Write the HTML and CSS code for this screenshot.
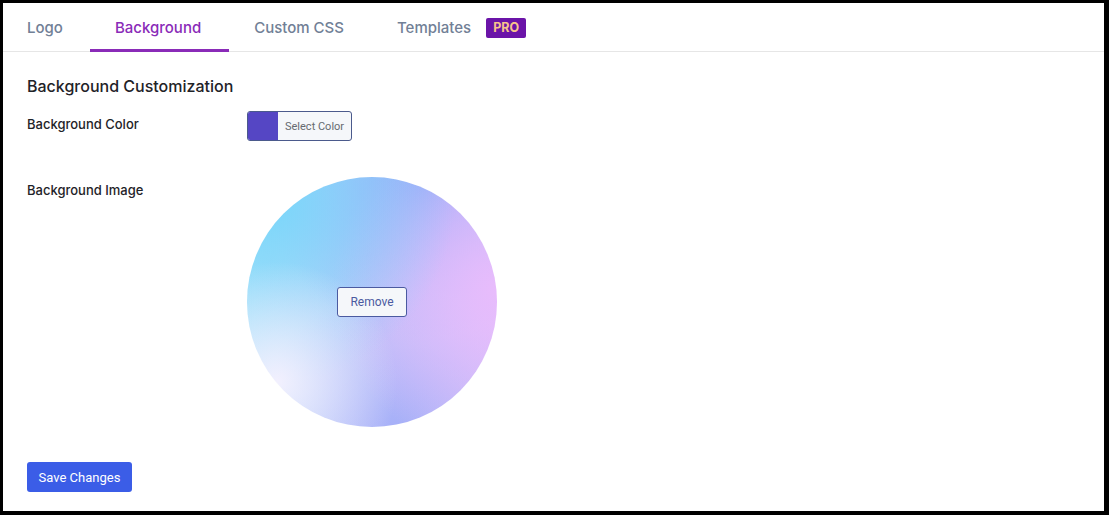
FILE: index.html
```html
<!DOCTYPE html>
<html>
<head>
<meta charset="utf-8">
<link rel="stylesheet" href="styles.css">
</head>
<body>
<div class="frame">
  <nav class="tabs">
    <div class="tab">Logo</div>
    <div class="tab active">Background</div>
    <div class="tab">Custom CSS</div>
    <div class="tab">Templates <span class="pro">PRO</span></div>
  </nav>
  <main class="content">
    <h2 class="title">Background Customization</h2>
    <div class="row row-color">
      <div class="label">Background Color</div>
      <div class="picker">
        <span class="swatch"></span>
        <span class="picker-text">Select Color</span>
      </div>
    </div>
    <div class="row row-image">
      <div class="label">Background Image</div>
      <div class="circle">
        <button class="remove">Remove</button>
      </div>
    </div>
    <button class="save">Save Changes</button>
  </main>
</div>
</body>
</html>
```
FILE: styles.css
```css
html, body { margin: 0; padding: 0; background: #000; }
body { font-family: "Inter", "Open Sans", sans-serif; }
.frame {
  box-sizing: border-box;
  width: 1109px;
  height: 515px;
  border-style: solid;
  border-color: #000;
  border-width: 3px 5px 4px 3px;
  background: #fff;
}
.tabs {
  display: flex;
  box-sizing: border-box;
  height: 49px;
  border-bottom: 1px solid #e6e6e6;
}
.tab {
  display: flex;
  align-items: center;
  padding: 3px 28px 0 25px;
  font-size: 15px;
  font-weight: 500;
  color: #718096;
  border-bottom: 3px solid transparent;
  margin-bottom: -1px;
}
.tab:first-child { padding-left: 24px; padding-right: 27px; }
.tab.active { color: #8a2bb8; border-bottom-color: #8a2bb8; }
.pro {
  margin-left: 15px;
  background: #6b14a8;
  color: #f8c58a;
  font-size: 12.5px;
  font-weight: 700;
  padding: 2px 7px;
  border-radius: 2px;
  line-height: 16px;
}
.content { padding: 24px 24px 0 24px; }
.title {
  margin: 0;
  font-size: 16px;
  font-weight: 500;
  color: #1f2328;
  line-height: 20px;
}
.row { display: flex; }
.label {
  width: 220px;
  font-size: 13px;
  font-weight: 500;
  color: #1f2328;
}
.row-color { margin-top: 15px; align-items: flex-start; }
.row-color .label { padding-top: 5px; }
.picker {
  display: flex;
  height: 30px;
  box-sizing: border-box;
  border: 1px solid #4b5a8c;
  border-radius: 3px;
  overflow: hidden;
  background: #f5f7fa;
}
.swatch { width: 30px; background: #5546c4; }
.picker-text {
  display: flex; align-items: center;
  padding: 0 7px 0 7px;
  font-family: "Roboto", sans-serif;
  font-size: 11px;
  color: #666a70;
}
.row-image { margin-top: 36px; }
.row-image .label { padding-top: 5px; }
.circle {
  width: 250px; height: 250px;
  border-radius: 50%;
  display: flex; align-items: center; justify-content: center;
  background:
    radial-gradient(circle at 12% 82%, rgba(242,240,254,1) 0%, rgba(242,240,254,0) 40%),
    radial-gradient(circle at 8% 8%, rgba(120,214,250,1) 0%, rgba(120,214,250,0) 58%),
    radial-gradient(circle at 100% 45%, rgba(232,188,252,1) 0%, rgba(232,188,252,0) 58%),
    radial-gradient(circle at 70% 2%, rgba(150,168,248,1) 0%, rgba(150,168,248,0) 52%),
    radial-gradient(circle at 60% 100%, rgba(166,176,248,1) 0%, rgba(166,176,248,0) 48%),
    linear-gradient(90deg, #b2e4fa 0%, #c4c8f8 50%, #d8c0fa 100%);
}
.remove {
  width: 70px; height: 30px;
  border: 1px solid #4b5aa0;
  border-radius: 3px;
  background: #f5f7fa;
  color: #4b5aa0;
  font-family: "Roboto", sans-serif;
  font-size: 12px;
  padding: 0;
}
.save {
  margin-top: 35px;
  width: 105px; height: 30px;
  border: none;
  border-radius: 3px;
  background: #3b5de7;
  color: #fff;
  font-family: "Roboto", sans-serif;
  font-size: 13px;
  padding: 0;
}
```
